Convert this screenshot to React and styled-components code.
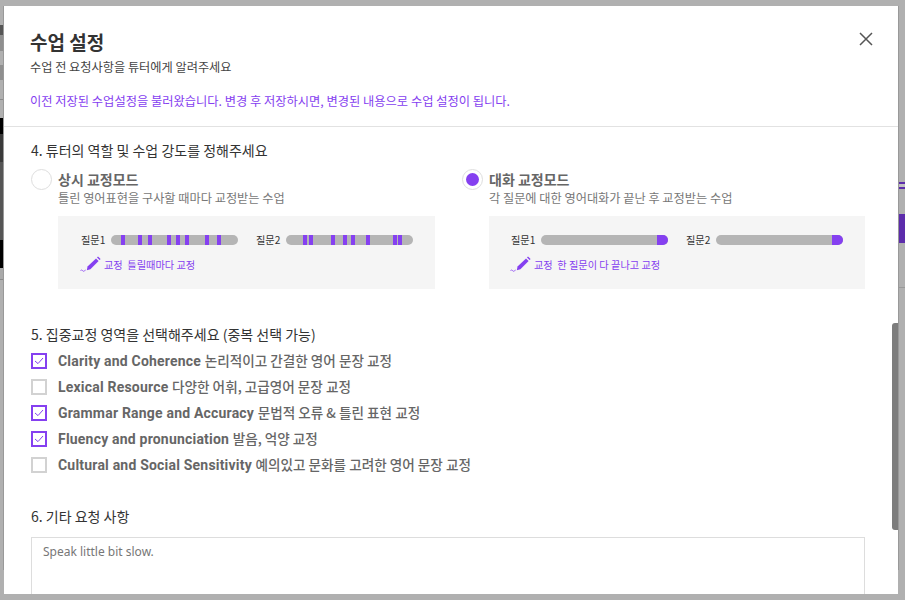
import React from "react";
import styled, { createGlobalStyle } from "styled-components";

const GlobalStyle = createGlobalStyle`
	html, body {
		margin: 0;
		padding: 0;
		width: 905px;
		height: 600px;
		overflow: hidden;
		background: #b0b0b0;
	}
	* {
		box-sizing: border-box;
	}
`;

const KR = `"Noto Sans CJK KR", "Noto Sans", sans-serif`;
const PURPLE = "#8540f0";

const Page = styled.div`
	display: flex;
	align-items: flex-start;
	width: 905px;
	height: 600px;
	font-family: ${KR};
	background: #b0b0b0;
`;

const Strip = styled.div`
	flex: 0 0 ${(p) => p.$width}px;
	height: 564px;
	margin-top: 6px;
	display: flex;
	flex-direction: column;
	overflow: hidden;
	border-${(p) => p.$edge}: 1px solid #999;
`;

const StripPiece = styled.div`
	flex: 0 0 ${(p) => p.$height}px;
	background: ${(p) => p.$color || "transparent"};
`;

const Modal = styled.div`
	position: relative;
	flex: 0 0 894px;
	height: 588px;
	margin-top: 6px;
	background: #fff;
	display: flex;
	flex-direction: column;
	overflow: hidden;
`;

const Header = styled.header`
	flex: 0 0 121px;
	padding: 22px 26px 0;
	border-bottom: 1px solid #e2e2e2;
`;

const Title = styled.h1`
	margin: 0;
	font-size: 19px;
	line-height: 28px;
	font-weight: 700;
	color: #333;
`;

const Subtitle = styled.p`
	margin: 2px 0 0;
	font-size: 12.2px;
	line-height: 18px;
	color: #444;
`;

const Notice = styled.p`
	margin: 16px 0 0;
	font-size: 12.25px;
	line-height: 18px;
	color: ${PURPLE};
`;

const CloseButton = styled.button`
	position: absolute;
	top: 26px;
	right: 25px;
	width: 14px;
	height: 14px;
	padding: 0;
	border: 0;
	background: none;
	display: block;

	svg {
		display: block;
	}
`;

const Body = styled.div`
	flex: 1;
	overflow: hidden;
	padding: 13px 33px 0 27px;
`;

const SectionTitle = styled.h2`
	margin: 0;
	font-size: 14px;
	line-height: 20px;
	font-weight: 400;
	color: #333;
`;

const ModeGrid = styled.div`
	display: grid;
	grid-template-columns: 404px 404px;
	column-gap: 27px;
	margin-top: 9px;
`;

const Mode = styled.div`
	display: grid;
	grid-template-columns: 20px 377px;
	column-gap: 7px;
	align-items: start;
`;

const Radio = styled.span`
	width: 21px;
	height: 21px;
	border: 1px solid #dedede;
	border-radius: 50%;
	background: #fff;
	display: flex;
	align-items: center;
	justify-content: center;

	&::after {
		content: "";
		display: ${(p) => (p.$on ? "block" : "none")};
		width: 13px;
		height: 13px;
		border-radius: 50%;
		background: ${PURPLE};
	}
`;

const ModeName = styled.div`
	font-size: 14px;
	line-height: 20px;
	font-weight: 700;
	color: #666;
`;

const ModeDesc = styled.div`
	margin-top: 1px;
	font-size: 12.2px;
	line-height: 17px;
	color: #777;
`;

const Sample = styled.div`
	width: ${(p) => p.$width}px;
	height: 73px;
	margin-top: 9px;
	padding: 19px 0 0 ${(p) => p.$pad}px;
	background: #f5f5f5;
`;

const BarRow = styled.div`
	display: flex;
	gap: 18px;
`;

const BarGroup = styled.div`
	display: flex;
	align-items: center;
	gap: 6px;
	font-size: 10.2px;
	line-height: 10px;
	color: #333;
`;

const BarLabel = styled.span`
	flex: 0 0 24px;
	min-width: 0;
	white-space: nowrap;
`;

const Bar = styled.div`
	position: relative;
	flex: 0 0 127px;
	height: 10px;
	border-radius: 5px;
	background: #b5b5b5;
	overflow: hidden;
`;

const Tick = styled.span`
	position: absolute;
	top: 0;
	bottom: 0;
	width: ${(p) => p.$width}px;
	background: ${PURPLE};
`;

const Note = styled.div`
	display: flex;
	align-items: center;
	gap: 3px;
	margin-top: 11px;
	margin-left: -1px;
	font-size: 10.2px;
	line-height: 16px;
	white-space: pre;
	color: ${PURPLE};
`;

const FocusSection = styled.section`
	margin-top: 35px;
`;

const CheckList = styled.ul`
	list-style: none;
	margin: 4px 0 0;
	padding: 0;
`;

const CheckRow = styled.li`
	display: flex;
	align-items: center;
	gap: 11px;
	height: 26px;
	color: #666;
`;

const CheckText = styled.span`
	padding-bottom: 4px;
`;

const AreaName = styled.span`
	font-family: Roboto, sans-serif;
	font-size: 14px;
	font-weight: 700;
	letter-spacing: 0.2px;
`;

const AreaDesc = styled.span`
	font-family: ${KR};
	font-size: 13.6px;
	font-weight: 500;
`;

const CheckBox = styled.span`
	flex: 0 0 16px;
	width: 16px;
	height: 16px;
	border: 2px solid ${(p) => (p.$on ? PURPLE : "#d2d2d2")};
	background: #fff;
	display: flex;
	align-items: center;
	justify-content: center;
`;

const OtherSection = styled.section`
	margin-top: 28px;
`;

const Request = styled.textarea`
	display: block;
	width: 834px;
	height: 90px;
	margin-top: 11px;
	padding: 5px 11px;
	border: 1px solid #ddd;
	border-radius: 0;
	outline: none;
	resize: none;
	overflow: hidden;
	font-family: "Noto Sans", sans-serif;
	font-size: 12px;
	line-height: 18px;
	color: #777;
`;

const ScrollThumb = styled.div`
	position: absolute;
	top: 317px;
	right: 0;
	width: 6px;
	height: 207px;
	border-radius: 3px 0 0 3px;
	background: #7d7d7d;
`;

const CheckMark = () => (
	<svg width="10" height="8" viewBox="0 0 10 8" fill="none">
		<path d="M1 4l3 2.6L9 1" stroke={PURPLE} strokeWidth="1" />
	</svg>
);

const PenIcon = () => (
	<svg width="21" height="17" viewBox="0 0 21 17" fill="none">
		<path d="M7.5 10.5L16 2.4l2.6 2.6-8.2 8.2-3.6 1z" fill={PURPLE} />
		<path d="M17 1.4l1-1 2.6 2.6-1 1z" fill={PURPLE} />
		<path
			d="M0.5 14.5c1.4-1.4 2.2.8 3.2.8s1-1.3 2-1.3"
			stroke={PURPLE}
			strokeWidth="0.8"
		/>
	</svg>
);

const leftPieces = [
	[19, "transparent"],
	[10, "#555"],
	[16, "#8f8f8f"],
	[14, "transparent"],
	[15, "#8f8f8f"],
	[19, "transparent"],
	[1, "#8a8a8a"],
	[18, "transparent"],
	[16, "#000"],
	[28, "#3a3a3a"],
	[78, "#555"],
	[28, "#000"],
	[11, "#a9a9a9"],
	[1, "#8a8a8a"],
];

const rightPieces = [
	[176, "transparent"],
	[2, "#5c2cab"],
	[3, "#c0c0c0"],
	[2, "#5c2cab"],
	[25, "transparent"],
	[29, "#5c2cab"],
	[44, "transparent"],
	[1, "#999"],
];

const modes = [
	{
		name: "상시 교정모드",
		desc: "틀린 영어표현을 구사할 때마다 교정받는 수업",
		note: "교정  틀릴때마다 교정",
		boxWidth: 377,
		pad: 23,
		bars: [
			[10, 27, 37, 56, 65, 74, 94, 106],
			[17, 23, 45, 57, 65, 80, 107, 112],
		],
		width: 4,
	},
	{
		name: "대화 교정모드",
		desc: "각 질문에 대한 영어대화가 끝난 후 교정받는 수업",
		note: "교정  한 질문이 다 끝나고 교정",
		on: true,
		boxWidth: 376,
		pad: 22,
		bars: [[116], [116]],
		width: 11,
	},
];

const focusAreas = [
	{ name: "Clarity and Coherence", desc: "논리적이고 간결한 영어 문장 교정", on: true },
	{ name: "Lexical Resource", desc: "다양한 어휘, 고급영어 문장 교정" },
	{ name: "Grammar Range and Accuracy", desc: "문법적 오류 & 틀린 표현 교정", on: true },
	{ name: "Fluency and pronunciation", desc: "발음, 억양 교정", on: true },
	{ name: "Cultural and Social Sensitivity", desc: "예의있고 문화를 고려한 영어 문장 교정" },
];

const App = () => {
	return (
		<Page>
			<GlobalStyle />
			<Strip $width={4} $edge="right">
				{leftPieces.map(([height, color], i) => (
					<StripPiece key={i} $height={height} $color={color} />
				))}
			</Strip>

			<Modal>
				<Header>
					<Title>수업 설정</Title>
					<Subtitle>수업 전 요청사항을 튜터에게 알려주세요</Subtitle>
					<Notice>
						이전 저장된 수업설정을 불러왔습니다. 변경 후 저장하시면, 변경된 내용으로 수업 설정이 됩니다.
					</Notice>
				</Header>
				<CloseButton aria-label="닫기">
					<svg width="14" height="14" viewBox="0 0 14 14" fill="none">
						<path d="M1 1l12 12M13 1L1 13" stroke="#555" strokeWidth="1.5" />
					</svg>
				</CloseButton>

				<Body>
					<SectionTitle>4. 튜터의 역할 및 수업 강도를 정해주세요</SectionTitle>
					<ModeGrid>
						{modes.map((mode) => (
							<Mode key={mode.name}>
								<Radio $on={mode.on} />
								<div>
									<ModeName>{mode.name}</ModeName>
									<ModeDesc>{mode.desc}</ModeDesc>
									<Sample $width={mode.boxWidth} $pad={mode.pad}>
										<BarRow>
											{mode.bars.map((ticks, i) => (
												<BarGroup key={i}>
													<BarLabel>질문{i + 1}</BarLabel>
													<Bar>
														{ticks.map((left) => (
															<Tick key={left} $width={mode.width} style={{ left }} />
														))}
													</Bar>
												</BarGroup>
											))}
										</BarRow>
										<Note>
											<PenIcon />
											<span>{mode.note}</span>
										</Note>
									</Sample>
								</div>
							</Mode>
						))}
					</ModeGrid>

					<FocusSection>
						<SectionTitle>5. 집중교정 영역을 선택해주세요 (중복 선택 가능)</SectionTitle>
						<CheckList>
							{focusAreas.map((area) => (
								<CheckRow key={area.name}>
									<CheckBox $on={area.on}>{area.on && <CheckMark />}</CheckBox>
									<CheckText>
										<AreaName>{area.name}</AreaName> <AreaDesc>{area.desc}</AreaDesc>
									</CheckText>
								</CheckRow>
							))}
						</CheckList>
					</FocusSection>

					<OtherSection>
						<SectionTitle>6. 기타 요청 사항</SectionTitle>
						<Request readOnly defaultValue="Speak little bit slow." />
					</OtherSection>
				</Body>
				<ScrollThumb />
			</Modal>

			<Strip $width={7} $edge="left">
				{rightPieces.map(([height, color], i) => (
					<StripPiece key={i} $height={height} $color={color} />
				))}
			</Strip>
		</Page>
	);
};

export default App;
